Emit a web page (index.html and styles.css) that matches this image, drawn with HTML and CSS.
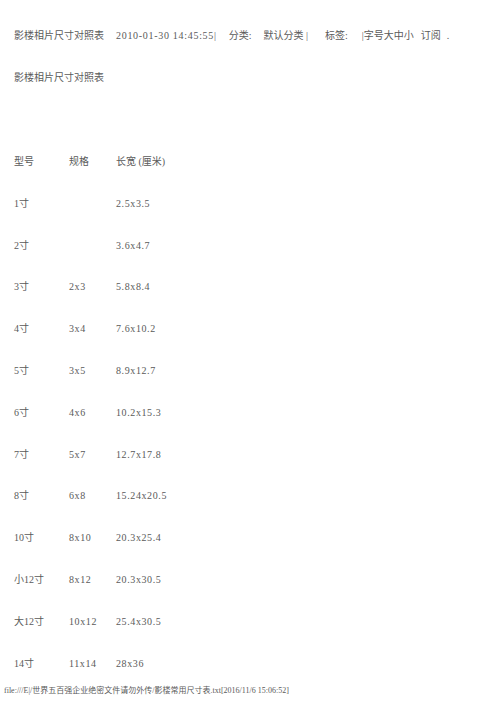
FILE: index.html
```html
<!DOCTYPE html>
<html lang="zh">
<head>
<meta charset="utf-8">
<title>影楼相片尺寸对照表</title>
<link rel="stylesheet" href="styles.css">
</head>
<body>
<div class="page">
  <div class="line head"><span>影楼相片尺寸对照表</span><span class="num gap1">2010-01-30 14:45:55|</span><span class="gap2">分类:</span><span class="gap3">默认分类 |</span><span class="gap4">标签:</span><span class="gap5">|字号大中小</span><span class="gap6">订阅</span><span class="gap7">.</span></div>
  <div class="line">影楼相片尺寸对照表</div>
  <div class="line"></div>
  <div class="table">
    <div class="row"><span>型号</span><span>规格</span><span>长宽 (厘米)</span></div>
    <div class="row"><span>1<i>寸</i></span><span class="num"></span><span class="num">2.5x3.5</span></div>
    <div class="row"><span>2<i>寸</i></span><span class="num"></span><span class="num">3.6x4.7</span></div>
    <div class="row"><span>3<i>寸</i></span><span class="num">2x3</span><span class="num">5.8x8.4</span></div>
    <div class="row"><span>4<i>寸</i></span><span class="num">3x4</span><span class="num">7.6x10.2</span></div>
    <div class="row"><span>5<i>寸</i></span><span class="num">3x5</span><span class="num">8.9x12.7</span></div>
    <div class="row"><span>6<i>寸</i></span><span class="num">4x6</span><span class="num">10.2x15.3</span></div>
    <div class="row"><span>7<i>寸</i></span><span class="num">5x7</span><span class="num">12.7x17.8</span></div>
    <div class="row"><span>8<i>寸</i></span><span class="num">6x8</span><span class="num">15.24x20.5</span></div>
    <div class="row"><span>10<i>寸</i></span><span class="num">8x10</span><span class="num">20.3x25.4</span></div>
    <div class="row"><span>小12<i>寸</i></span><span class="num">8x12</span><span class="num">20.3x30.5</span></div>
    <div class="row"><span>大12<i>寸</i></span><span class="num">10x12</span><span class="num">25.4x30.5</span></div>
    <div class="row"><span>14<i>寸</i></span><span class="num">11x14</span><span class="num">28x36</span></div>
  </div>
</div>
<div class="footer">file:///E|/世界五百强企业绝密文件请勿外传/影楼常用尺寸表.txt[2016/11/6 15:06:52]</div>
</body>
</html>
```

FILE: styles.css
```css
html, body {
  margin: 0;
  padding: 0;
  background: #ffffff;
}
body {
  font-family: "Liberation Serif", "Noto Sans CJK SC", serif;
  font-size: 10px;
  color: #5a5a5a;
}
.page {
  padding: 15px 0 0 14px;
}
.line {
  height: 42px;
  line-height: 42px;
  white-space: nowrap;
}
.head span {
  display: inline-block;
}
.num {
  letter-spacing: 0.6px;
}
.head .num {
  letter-spacing: 0.7px;
}
.gap1 { margin-left: 12px; }
.gap2 { margin-left: 12px; }
.gap3 { margin-left: 12px; }
.gap4 { margin-left: 17px; }
.gap5 { margin-left: 14px; }
.gap6 { margin-left: 7px; }
.gap7 { margin-left: 6px; }
.row {
  display: grid;
  grid-template-columns: 55px 47px auto;
  height: 41.8px;
  line-height: 41.8px;
}
.row i {
  font-style: normal;
}
.footer {
  font-size: 8px;
  color: #5a5a5a;
  padding-left: 4px;
  line-height: 14px;
  white-space: nowrap;
}
```
